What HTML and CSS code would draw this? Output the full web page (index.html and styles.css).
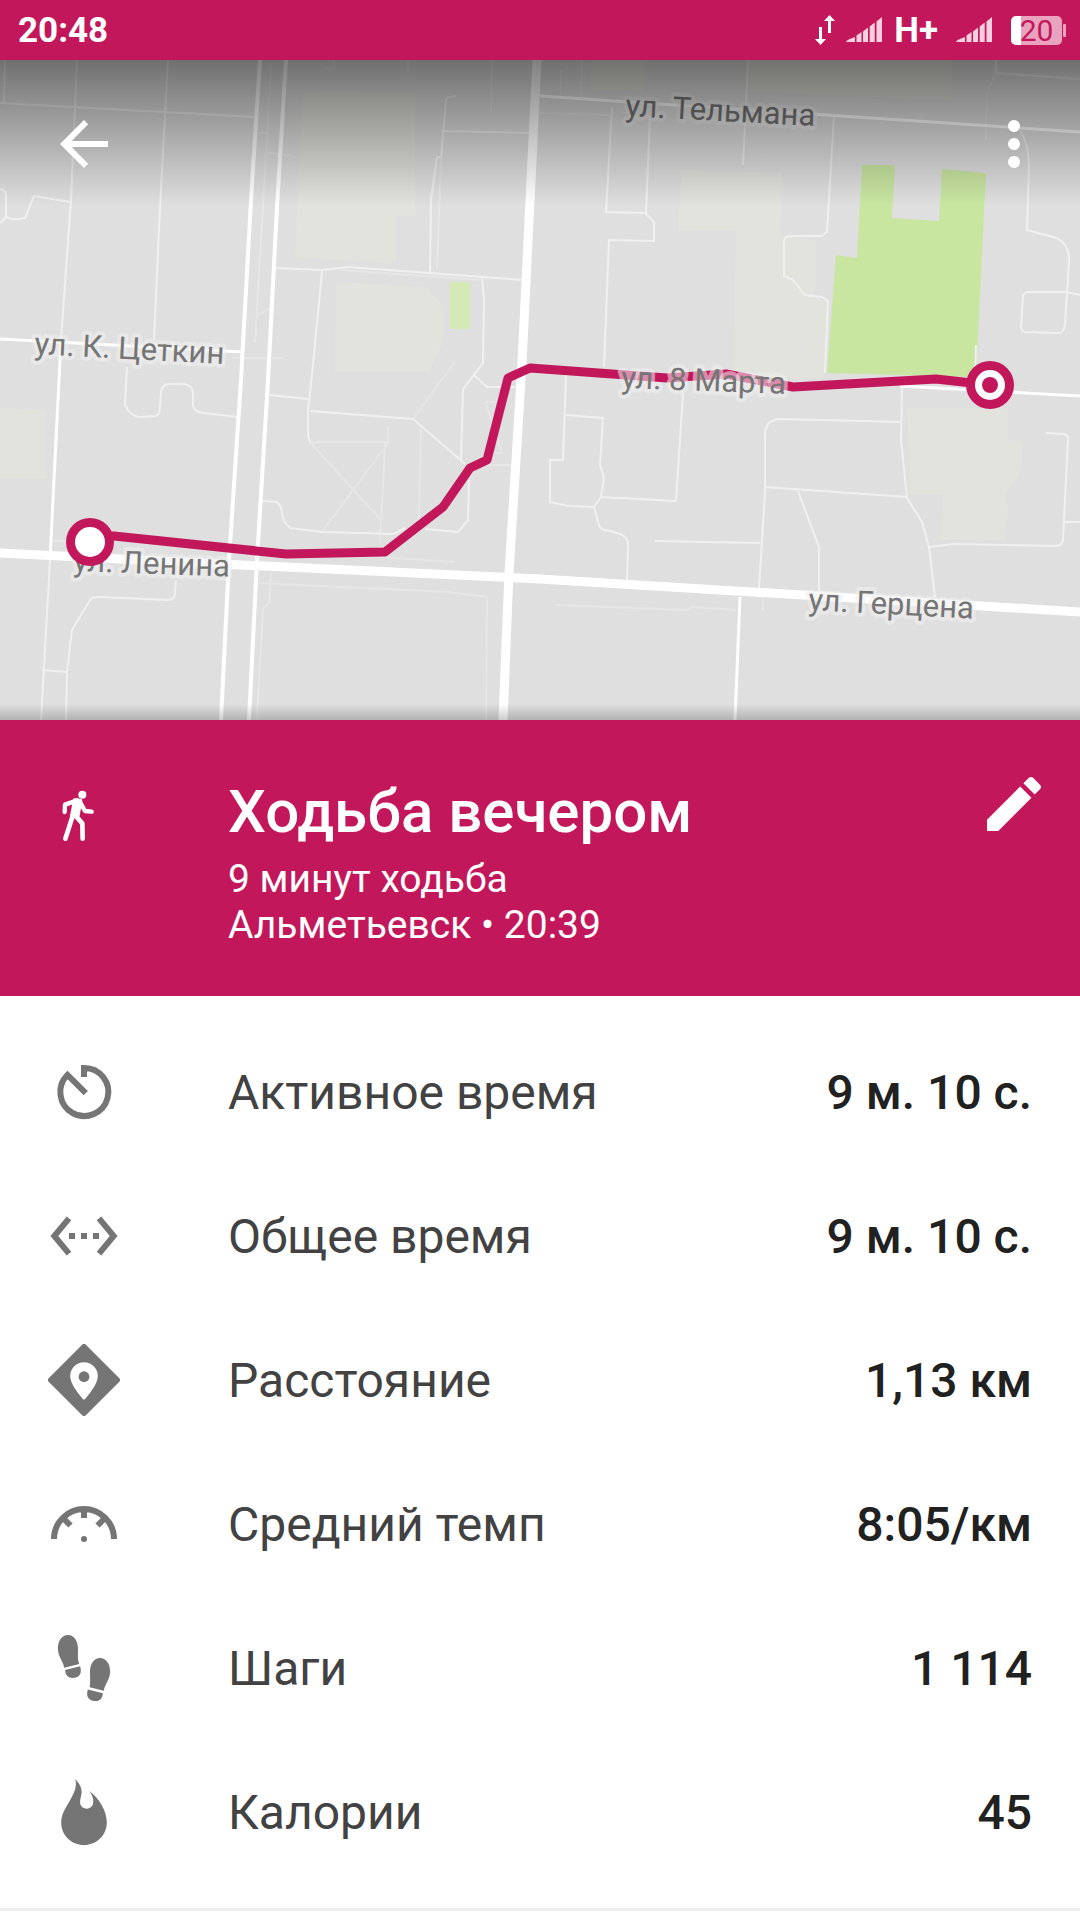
FILE: index.html
```html
<!DOCTYPE html>
<html lang="ru">
<head>
  <meta charset="UTF-8" />
  <meta name="viewport" content="width=device-width, initial-scale=1" />
  <title>Ходьба вечером</title>
  <link rel="stylesheet" href="styles.css">
</head>
<body>

  <!-- Status bar -->
  <div class="status-bar">
    <span class="clock">20:48</span>
    <svg class="traffic" viewBox="0 0 20 30" fill="#fff" aria-hidden="true">
      <path d="M4 12h3v12h4l-5.500 6L0 24h4zM13 18V6H9l5.500-6L20 6h-4v12z"/>
    </svg>
    <svg class="signal" viewBox="0 0 36 26" aria-hidden="true">
      <path d="M0 25q0-2 9-5v5zM10.500 18.500l5-3.500v10h-5zM17 14.500l5-4V25h-5zM23.700 9.500l5-4V25h-5zM30.500 4.500L36 0v25h-5.500z"/>
    </svg>
    <span class="network">H+</span>
    <svg class="signal" viewBox="0 0 36 26" aria-hidden="true">
      <path d="M0 25q0-2 9-5v5zM10.500 18.500l5-3.500v10h-5zM17 14.500l5-4V25h-5zM23.700 9.500l5-4V25h-5zM30.500 4.500L36 0v25h-5.500z"/>
    </svg>
    <span class="battery">20</span>
  </div>

  <!-- Map -->
  <div class="map">
    <svg class="map-canvas" viewBox="0 60 1080 660" role="img" aria-label="Маршрут на карте">
      <defs>
        <linearGradient id="topShade" x1="0" y1="0" x2="0" y2="1">
          <stop offset="0" stop-color="#000" stop-opacity="0.5"/>
          <stop offset="1" stop-color="#000" stop-opacity="0"/>
        </linearGradient>
        <linearGradient id="bottomShade" x1="0" y1="0" x2="0" y2="1">
          <stop offset="0" stop-color="#000" stop-opacity="0"/>
          <stop offset="1" stop-color="#000" stop-opacity="0.2"/>
        </linearGradient>
      </defs>

      <rect class="land" x="0" y="60" width="1080" height="660"/>

      <g class="block">
        <path d="M303 90L415 92V216H396V263L295 258z"/>
        <path d="M336 282L427 287L444 307V340L429 372H335z"/>
        <path d="M0 408L46 410L45 479H0z"/>
        <path d="M592 60H644V90H590z"/>
        <path d="M748 60H952V100L748 92z"/>
        <path d="M682 170L782 173L780 235L815 240V297L826 300L825 378H733L736 231H678z"/>
        <path d="M907 408H1008V440L1022 442V470L1005 495L1008 507L1005 540H940L943 495H910z"/>
      </g>
      <rect class="lawn" x="450" y="282" width="20" height="47" rx="2"/>
      <path class="park" d="M862 165H895L892 218L939 221L942 169L986 173L976 377L827 373L836 255L857 258z"/>

      <g class="path faint">
        <path d="M271 67L255 343M258 133H268M268 153L295 156M258 315L270 308"/>
        <path d="M441 157L437 270M334 60V69L323 68M408 60V74M492 60L491 113"/>
        <path d="M310 442H388M388 427V443L322 532M310 442L381 520M385 443L380 543M456 360L413 419M421 425L419 520"/>
        <path d="M379 557L455 562M258 583L448 592L487 597L486 720M271 573L269 603L263 608L257 720"/>
        <path d="M485 402H502M485 402L502 453H495M487 465H512"/>
        <path d="M540 113L609 115M582 60L581 97M561 70V95M996 73L988 90L986 110V140"/>
        <path d="M555 605L688 610L693 607L736 610M763 588V610M340 270L482 280"/>
        <path d="M232 358H282M52 541H70"/>
      </g>

      <g class="path">
        <path d="M77 60L71 200L61 340M168 60L160 207L154 340M5 60L4 103M0 103L255 117M50 560L41 720"/>
        <path d="M0 189Q6 190 6 197V217L0 223M6 217Q14 221 25 218L34 196L70 202"/>
        <path d="M275 268L322 270L348 267L523 280M322 271L312 375L308 410V435L310 442"/>
        <path d="M456 96Q446 96 446 100L441 157H437L431 200L430 272M444 131L530 133"/>
        <path d="M269 395L308 399M310 411L413 419L465 464M262 501L276 502Q281 504 282 513T290 528L322 532L394 534L405 528M425 529L458 532L468 520L469 480"/>
        <path d="M482 277L484 300L483 363L463 389L461 460M474 375L487 387H515"/>
        <path d="M127 367L125 405Q131 417 140 417L155 416Q160 415 160 407L161 392Q162 384 170 384H184Q193 385 193 394V406Q194 412 204 413L238 417"/>
        <path d="M176 580L175 594Q174 600 168 600L100 597Q92 597 90 600L72 630L67 672L66 720M42 670L67 672"/>
        <path d="M748 60L743 165M612 107L606 212L645 213L654 222V241L609 240L604 367M650 117L646 213"/>
        <path d="M834 115L827 232L821 236H790Q784 236 784 242V276L793 280L805 295L822 297L828 301L825 373"/>
        <path d="M1020 130Q1029 145 1029 165L1027 230L1057 238Q1069 244 1069 260L1065 325Q1064 333 1058 333L1024 332L1021 328L1023 295L1027 292H1067L1080 295"/>
        <path d="M996 60V73L1080 79"/>
        <path d="M566 375L563 460H550V502L568 506L594 507L601 497L604 478L600 465L603 418L566 415M601 497L676 501L683 393"/>
        <path d="M594 507L599 525Q600 530 610 531L620 534Q629 538 628 546L627 580M655 541L760 543"/>
        <path d="M902 387L901 440L907 498L922 522L929 547L935 597M902 422L780 419Q765 420 765 434V493L759 588M765 487L907 497M798 491L819 547V593"/>
        <path d="M1046 433L1064 434Q1068 435 1068 439L1063 540Q1062 546 1056 546L953 544L929 547M1064 522H1080"/>
        <path d="M976 345L975 380"/>
      </g>

      <g class="street">
        <path d="M540 96L1080 132"/>
        <path d="M0 339L243 352"/>
        <path d="M61 340L50 560"/>
        <path d="M900 386L1080 396"/>
        <path d="M740 597L735 720"/>
        <path class="wide" d="M260 60L251 200L241 380L229 560L221 720"/>
        <path class="wide" d="M286 60L277 207L268 380L257 560L249 720"/>
      </g>

      <g class="avenue">
        <path d="M537 60L530 200L522 363L509 573L503 720"/>
        <path d="M0 553L241 565L540 579L1080 612"/>
      </g>

      <path class="route" d="M90 536H114L286 554L385 552L443 507L470 468L487 460L508 378L530 368L667 378L726 374L793 387L936 379L990 385"/>

      <g class="street-name">
        <text transform="translate(625 116) rotate(3)">ул. Тельмана</text>
        <text transform="translate(34 354) rotate(3)">ул. К. Цеткин</text>
        <text transform="translate(621 388) rotate(2)">ул. 8 Марта</text>
        <text transform="translate(73 571) rotate(2)">ул. Ленина</text>
        <text transform="translate(808 610) rotate(3)">ул. Герцена</text>
      </g>

      <!-- start and finish -->
      <circle class="marker" cx="90" cy="542" r="24"/>
      <circle cx="90" cy="542" r="15" fill="#fff"/>
      <circle class="marker" cx="990" cy="385" r="24"/>
      <circle cx="990" cy="385" r="15" fill="#fff"/>
      <circle class="marker" cx="990" cy="385" r="8"/>

      <rect x="0" y="60" width="1080" height="146" fill="url(#topShade)"/>
      <rect x="0" y="704" width="1080" height="16" fill="url(#bottomShade)"/>
    </svg>

    <div class="toolbar">
      <button class="icon-button" type="button" aria-label="Назад">
        <svg class="icon" viewBox="0 0 24 24" fill="#fff"><path d="M20 11H7.830l5.590-5.590L12 4l-8 8 8 8 1.410-1.410L7.830 13H20v-2z"/></svg>
      </button>
      <button class="icon-button" type="button" aria-label="Ещё">
        <svg class="icon" viewBox="0 0 24 24" fill="#fff"><circle cx="12" cy="6" r="2"/><circle cx="12" cy="12" r="2"/><circle cx="12" cy="18" r="2"/></svg>
      </button>
    </div>
  </div>

  <!-- Activity header -->
  <header class="activity">
    <svg class="icon walk" viewBox="-6 -12 216 216" fill="none" stroke="#fff" stroke-linecap="round" stroke-linejoin="round" aria-hidden="true">
      <circle cx="97" cy="44" r="12" fill="#fff" stroke="none"/>
      <path d="M82 61L45 74L44 96M90 66L105 93L125 95" stroke-width="13"/>
      <path d="M70 102L46 176M74 104L97 130L98 176" stroke-width="14"/>
      <path d="M74 60L92 62L84 106L65 108z" fill="#fff" stroke-width="10"/>
    </svg>
    <div class="activity-text">
      <h1>Ходьба вечером</h1>
      <p>9 минут ходьба</p>
      <p>Альметьевск • 20:39</p>
    </div>
    <button class="icon-button" type="button" aria-label="Изменить">
      <svg class="icon" viewBox="0 0 24 24" fill="#fff"><path d="M3 17.250V21h3.750L17.810 9.940l-3.750-3.750L3 17.250zM20.710 7.040c.390-.390.390-1.020 0-1.410l-2.340-2.340c-.390-.390-1.020-.390-1.410 0L15.130 5.120l3.750 3.750 1.830-1.830z"/></svg>
    </button>
  </header>

  <!-- Stats -->
  <dl class="stats">
    <div class="row">
      <dt>
        <svg class="icon" viewBox="0 0 24 24" aria-hidden="true"><path d="M12 7V4A8 8 0 1 1 6.500 6.300L12.600 12.400" fill="none" stroke="#757575" stroke-width="2"/></svg>
        Активное время
      </dt>
      <dd>9 м. 10 с.</dd>
    </div>
    <div class="row">
      <dt>
        <svg class="icon" viewBox="0 0 24 24" aria-hidden="true"><path d="M7.770 6.760L6.230 5.480.820 12l5.410 6.520 1.540-1.280L3.420 12l4.350-5.240zM7 13h2v-2H7v2zm10-2h-2v2h2v-2zm-6 2h2v-2h-2v2zm6.770-7.520l-1.540 1.280L20.580 12l-4.350 5.240 1.540 1.280L23.180 12l-5.410-6.520z"/></svg>
        Общее время
      </dt>
      <dd>9 м. 10 с.</dd>
    </div>
    <div class="row">
      <dt>
        <svg class="icon" viewBox="0 0 24 24" aria-hidden="true">
          <path d="M11.300.300a1 1 0 0 1 1.400 0l11 11a1 1 0 0 1 0 1.400l-11 11a1 1 0 0 1-1.400 0l-11-11a1 1 0 0 1 0-1.400z"/>
          <path d="M12 6.100a4.600 4.600 0 0 0-4.600 4.600c0 3.300 4.600 8 4.600 8s4.600-4.700 4.600-8A4.600 4.600 0 0 0 12 6.100z" fill="#fff"/>
          <circle cx="12" cy="10.900" r="1.800"/>
        </svg>
        Расстояние
      </dt>
      <dd>1,13 км</dd>
    </div>
    <div class="row">
      <dt>
        <svg class="icon" viewBox="0 0 24 24" aria-hidden="true">
          <path d="M2 17a10 10 0 0 1 20 0M12 7v3M5.500 10.500L7.500 12.500M18.500 10.500L16.500 12.500" fill="none" stroke="#757575" stroke-width="2"/>
          <circle cx="12" cy="17" r="1"/>
        </svg>
        Средний темп
      </dt>
      <dd>8:05/км</dd>
    </div>
    <div class="row">
      <dt>
        <svg class="icon" viewBox="0 0 24 24" aria-hidden="true">
          <path d="M6.600 1C4.500 1 3.300 3.200 3.300 5.400C3.300 8.300 5 9.500 5.400 11.900L10.400 10.700C9.800 8.900 10 7.800 10 5.500C10 3 8.700 1 6.600 1zM5.700 12.700L10.700 11.400C11.300 13.300 10.800 14.800 9.200 15.200C7.300 15.700 5.800 14.800 5.700 12.700z"/>
          <path d="M17.400 8.700C19.500 8.700 20.700 10.900 20.700 13.100C20.700 16 19 17.200 18.600 19.600L13.900 18.400C14.200 16.600 14 15.500 14 13.200C14 10.700 15.300 8.700 17.400 8.700zM18.300 20.400L13.300 19.200C12.700 21 13.200 22.500 14.800 22.900C16.700 23.400 18.200 22.500 18.300 20.400z"/>
        </svg>
        Шаги
      </dt>
      <dd>1 114</dd>
    </div>
    <div class="row">
      <dt>
        <svg class="icon" viewBox="0 0 24 24" aria-hidden="true"><path d="M9.100 1C10.400 2.500 11.400 4 11.200 5.700C11.100 6.800 10.700 7.600 10.700 8.700C10.700 10 11.600 10.900 12.900 10.900C14.200 10.900 15 10 15.100 8.700C15.200 7.200 14.500 6.200 13.800 5C17 7.400 19.600 11.500 19.600 15.500C19.600 19.800 16.200 23 12 23S4.400 19.800 4.400 15.500C4.400 12.500 6 10.500 7.500 7.800C8.900 5.300 9.700 3.500 9.100 1z"/></svg>
        Калории
      </dt>
      <dd>45</dd>
    </div>
  </dl>

</body>
</html>
```
FILE: styles.css
```css
* {
  box-sizing: border-box;
}
body {
  margin: 0;
  background: #fff;
  font-family: Roboto, sans-serif;
}
svg {
  display: block;
  flex-shrink: 0;
}
.icon {
  width: 72px;
  height: 72px;
}
.icon-button {
  padding: 0;
  border: none;
  background: none;
  cursor: pointer;
}

/* Status bar */
.status-bar {
  display: flex;
  align-items: center;
  height: 60px;
  padding: 0 14px 0 18px;
  background: #c2185b;
  color: #fff;
  font-size: 35px;
  font-weight: 700;
}
.clock {
  margin-right: auto;
}
.traffic {
  width: 20px;
  height: 30px;
  margin-right: 11px;
}
.signal {
  width: 36px;
  height: 26px;
  fill: #f9cfe0;
}
.network {
  margin: 0 18px 0 12px;
}
.battery {
  position: relative;
  width: 51px;
  height: 29px;
  margin: 0 4px 0 19px;
  border-radius: 5px;
  background: linear-gradient(90deg, #fff 10px, #eaa3bf 10px);
  color: #c2185b;
  font-size: 30px;
  font-weight: 400;
  line-height: 29px;
  text-align: center;
}
.battery::after {
  content: "";
  position: absolute;
  top: 8px;
  right: -4px;
  width: 3px;
  height: 13px;
  border-radius: 1px;
  background: #eaa3bf;
}

/* Map */
.map {
  position: relative;
}
.map-canvas {
  width: 100%;
}
.land {
  fill: #dfdfdf;
}
.block {
  fill: #e2e3dd;
}
.lawn {
  fill: #d3e9b6;
}
.park {
  fill: #c9e6a1;
}
.path, .street, .avenue, .route {
  fill: none;
  stroke: #f0f0f0;
  stroke-width: 2;
  stroke-linejoin: round;
}
.path.faint {
  stroke: #e6e6e6;
}
.street {
  stroke: #fff;
  stroke-width: 3;
}
.wide {
  stroke-width: 4;
}
.avenue {
  stroke: #fff;
  stroke-width: 9;
}
.route {
  stroke: #c2185b;
  stroke-width: 9;
}
.marker {
  fill: #c2185b;
}
.street-name {
  fill: #757575;
  stroke: rgba(240, 240, 240, 0.55);
  stroke-width: 8;
  stroke-linejoin: round;
  paint-order: stroke;
  font-size: 31px;
}
.toolbar {
  position: absolute;
  top: 0;
  left: 0;
  right: 0;
  display: flex;
  justify-content: space-between;
  padding: 48px 30px 48px 48px;
}

/* Activity header */
.activity {
  display: flex;
  align-items: flex-start;
  padding: 48px 30px 48px 48px;
  background: #c2185b;
  color: #fff;
}
.walk {
  margin-top: 8px;
}
.activity-text {
  flex: 1;
  padding: 8px 0 0 108px;
}
h1 {
  margin: 0 0 8px;
  font-size: 60px;
  font-weight: 500;
  line-height: 72px;
}
p {
  margin: 0;
  font-size: 39px;
  line-height: 46px;
}

/* Stats */
.stats {
  margin: 0;
  padding: 24px 0;
  border-bottom: 3px solid #eee;
}
.row {
  display: flex;
  align-items: center;
  justify-content: space-between;
  height: 144px;
  padding: 0 48px;
  font-size: 48px;
}
dt {
  display: flex;
  align-items: center;
  gap: 108px;
  color: #424242;
}
dt .icon {
  fill: #757575;
}
dd {
  margin: 0;
  color: #212121;
  font-weight: 500;
}
```
